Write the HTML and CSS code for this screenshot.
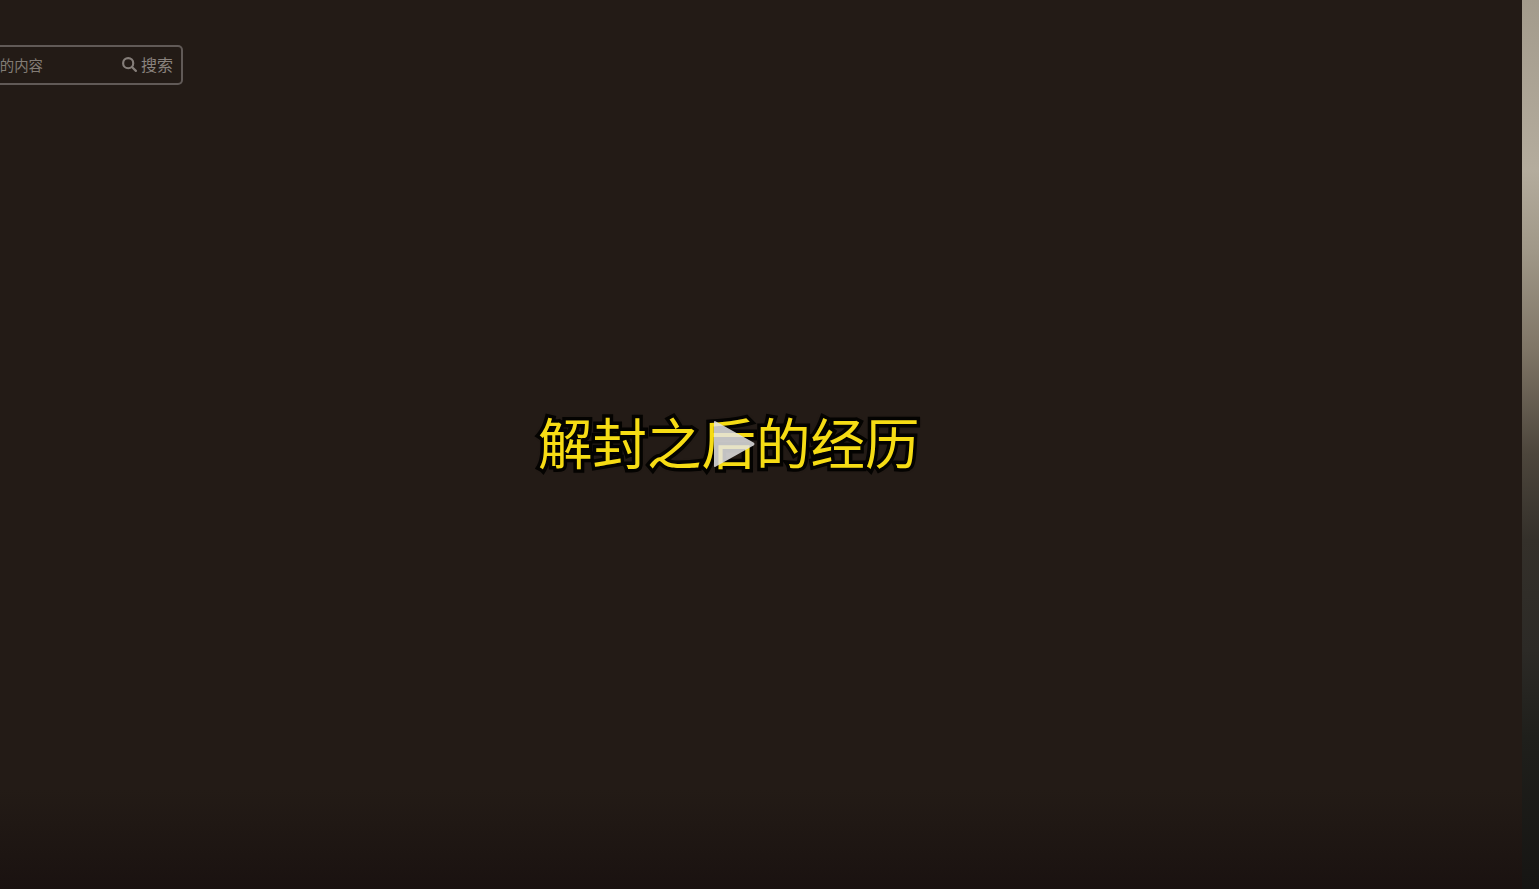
FILE: index.html
```html
<!DOCTYPE html>
<html lang="zh-CN">
<head>
<meta charset="utf-8">
<title>解封之后的经历</title>
<link rel="stylesheet" href="styles.css">
</head>
<body>
<main class="stage">
  <form class="search">
    <span class="placeholder">请输入要搜索的内容</span>
    <span class="search-btn">
      <svg class="search-icon" viewBox="0 0 16 16" aria-hidden="true"><circle cx="6.6" cy="6.6" r="5.4"/><path d="M10.6 10.6 14.8 14.8"/></svg>
      <span class="search-label">搜索</span>
    </span>
  </form>
  <div class="video-title">解封之后的经历</div>
  <svg class="play" viewBox="0 0 42 48" aria-hidden="true"><path d="M2.5 1.2 40.5 22.5Q42.5 24 40.5 25.5L2.5 46.8Q1 47.5 1 46V2Q1 .5 2.5 1.2Z"/></svg>
</main>
<aside class="strip"></aside>
</body>
</html>
```
FILE: styles.css
```css
html, body {
  margin: 0;
  height: 100%;
  overflow: hidden;
}
body {
  display: flex;
  background: #221a16;
  font-family: "Liberation Sans", "Noto Sans CJK SC", sans-serif;
}
.stage {
  position: relative;
  flex: 1;
  padding-top: 45px;
  overflow: hidden;
  background: linear-gradient(to bottom, #231b16 0, #231b16 790px, #1a1210 889px);
}
.search {
  display: flex;
  align-items: center;
  justify-content: flex-end;
  box-sizing: border-box;
  width: 183px;
  height: 40px;
  border: 2px solid #615a57;
  border-left: 0;
  border-radius: 0 5px 5px 0;
  overflow: hidden;
}
.placeholder {
  flex: none;
  margin-top: 2px;
  margin-right: 79px;
  font-size: 14.4px;
  line-height: 20px;
  white-space: nowrap;
  color: #827b75;
}
.search-btn {
  flex: none;
  display: flex;
  align-items: center;
  gap: 4px;
  margin-right: 8px;
  font-size: 16px;
  color: #8a837e;
}
.search-label {
  margin-top: -3px;
}
.search-icon {
  width: 15px;
  height: 15px;
  margin-top: -2px;
  fill: none;
  stroke: #857e79;
  stroke-width: 2.3;
  stroke-linecap: round;
}
.video-title {
  position: absolute;
  left: 538px;
  top: 406px;
  font-family: "Noto Sans CJK SC", sans-serif;
  font-size: 54.5px;
  font-weight: 400;
  line-height: 70px;
  white-space: nowrap;
  color: #f6dc14;
  -webkit-text-stroke: 7px #050402;
  paint-order: stroke fill;
  filter: blur(0.6px);
  text-shadow: 0 0 4px #000;
}
.play {
  position: absolute;
  left: 713px;
  top: 420px;
  width: 42px;
  height: 48px;
  fill: rgba(228, 228, 228, 0.85);
}
.strip {
  flex: none;
  width: 17px;
  background: linear-gradient(to bottom, #a39b8c 0, #b4ac9d 170px, #a09888 250px, #7f7566 350px, #4d463c 453px, #34302a 540px, #2c2a26 650px, #1f1f1b 737px, #161513 889px);
}
```
